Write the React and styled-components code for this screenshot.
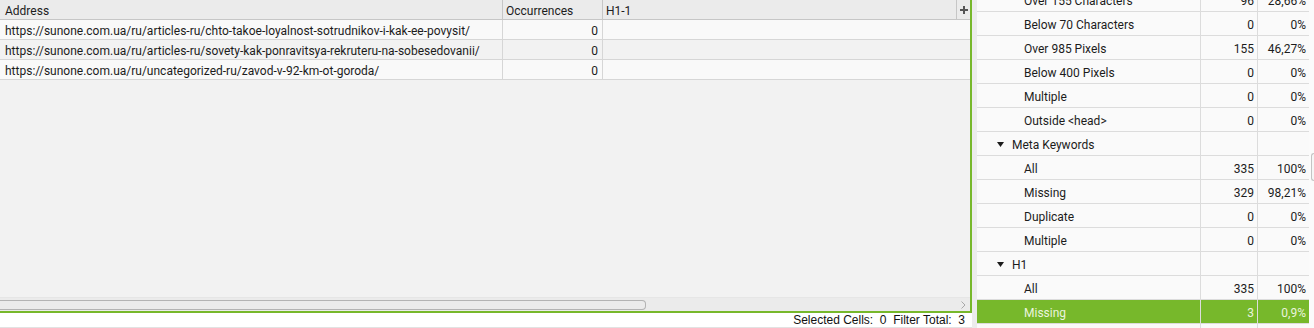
import React from "react";
import styled, { createGlobalStyle } from "styled-components";

const GREEN = "#77b82b";

const Global = createGlobalStyle`
  html, body { margin: 0; padding: 0; background: #ececec; }
  body { font-family: Roboto, "Noto Sans", sans-serif; font-size: 12px; color: #1c1c1c; }
`;

const Screen = styled.div`
  display: flex;
  width: 1314px;
  height: 328px;
  overflow: hidden;
  background: #ececec;
`;

const LeftPane = styled.div`
  width: 972px;
  display: flex;
  flex-direction: column;
  flex: none;
`;

const TablePanel = styled.div`
  height: 313px;
  box-sizing: border-box;
  border-right: 2px solid ${GREEN};
  border-bottom: 2px solid ${GREEN};
  background: #f2f2f2;
  display: flex;
  flex-direction: column;
`;

const Grid = styled.div`
  flex: 1;
  display: flex;
  flex-direction: column;
  min-height: 0;
`;

const Row = styled.div`
  display: grid;
  grid-template-columns: 503px 100px 1fr ${(p) => (p.$header ? "13px" : "0px")};
  height: 20px;
  box-sizing: border-box;
  border-bottom: 1px solid ${(p) => (p.$header ? "#c6c6c6" : "#d6d6d6")};
  background: ${(p) => (p.$header ? "#ebebeb" : p.$alt ? "#f2f2f2" : "#f9f9f9")};
`;

const Cell = styled.div`
  box-sizing: border-box;
  height: 19px;
  padding: 3px ${(p) => (p.$right ? "4px" : "3px")} 0 ${(p) => (p.$first ? "5px" : "3px")};
  line-height: 16px;
  white-space: nowrap;
  overflow: hidden;
  text-align: ${(p) => (p.$right ? "right" : "left")};
  border-right: ${(p) => (p.$last ? "none" : `1px solid ${p.$header ? "#c6c6c6" : "#d6d6d6"}`)};
`;

const PlusCell = styled.div`
  display: flex;
  align-items: center;
  justify-content: center;
  height: 19px;
  padding-left: 1px;
`;

const HScroll = styled.div`
  height: 13px;
  flex: none;
  background: #ebebeb;
  display: flex;
  align-items: center;
  justify-content: space-between;
  padding-right: 4px;
  border-top: 1px solid #e6e6e6;
`;

const HThumb = styled.div`
  width: 645px;
  height: 8px;
  border: 1px solid #b3b3b3;
  border-left: none;
  border-radius: 0 4px 4px 0;
  background: #ebebeb;
`;

const StatusBar = styled.div`
  flex: 1;
  background: #ffffff;
  border-bottom: 1px solid #e2e2e2;
  display: flex;
  align-items: center;
  justify-content: flex-end;
  padding-right: 7px;
  font-family: "Liberation Sans", Arial, sans-serif;
  font-size: 12px;
  color: #111;
  white-space: pre;
`;

const Splitter = styled.div`
  width: 5px;
  flex: none;
  background: #ececec;
`;

const RightPane = styled.div`
  flex: 1;
  display: flex;
  overflow: hidden;
  background: #f7f7f7;
`;

const Tree = styled.div`
  flex: 1;
  overflow: hidden;
`;

const TreeInner = styled.div`
  margin-top: -12px;
`;

const TreeRow = styled.div`
  display: grid;
  grid-template-columns: 224px 57px 1fr;
  height: 24px;
  box-sizing: border-box;
  border-bottom: 1px solid #dcdcdc;
  background: ${(p) => (p.$selected ? GREEN : "#fafafa")};
  color: ${(p) => (p.$selected ? "#eaf4de" : "#1c1c1c")};
`;

const TreeCell = styled.div`
  box-sizing: border-box;
  height: 23px;
  padding-top: 4px;
  line-height: 19px;
  white-space: nowrap;
  overflow: hidden;
  text-align: ${(p) => (p.$right ? "right" : "left")};
  padding-right: ${(p) => (p.$right ? "3px" : "0")};
  padding-left: ${(p) => p.$indent || 0}px;
  border-right: ${(p) => (p.$last ? "none" : "1px solid #dcdcdc")};
  display: flex;
  align-items: center;
  justify-content: ${(p) => (p.$right ? "flex-end" : "flex-start")};
`;

const Caret = styled.svg`
  width: 7px;
  height: 5px;
  margin-right: 8px;
  margin-top: -2px;
  flex: none;
`;

const VScroll = styled.div`
  width: 5px;
  flex: none;
  background: #fbfbfb;
  padding-top: 153px;
  box-sizing: border-box;
`;

const VThumb = styled.div`
  margin-left: 2px;
  height: 26px;
  border: 1px solid #c4c4c4;
  border-right: none;
  border-radius: 3px 0 0 3px;
  background: #f6f6f6;
`;

const rows = [
  { url: "https://sunone.com.ua/ru/articles-ru/chto-takoe-loyalnost-sotrudnikov-i-kak-ee-povysit/", n: 0 },
  { url: "https://sunone.com.ua/ru/articles-ru/sovety-kak-ponravitsya-rekruteru-na-sobesedovanii/", n: 0 },
  { url: "https://sunone.com.ua/ru/uncategorized-ru/zavod-v-92-km-ot-goroda/", n: 0 },
];

const tree = [
  { label: "Over 155 Characters", n: "96", p: "28,66%" },
  { label: "Below 70 Characters", n: "0", p: "0%" },
  { label: "Over 985 Pixels", n: "155", p: "46,27%" },
  { label: "Below 400 Pixels", n: "0", p: "0%" },
  { label: "Multiple", n: "0", p: "0%" },
  { label: "Outside <head>", n: "0", p: "0%" },
  { label: "Meta Keywords", group: true },
  { label: "All", n: "335", p: "100%" },
  { label: "Missing", n: "329", p: "98,21%" },
  { label: "Duplicate", n: "0", p: "0%" },
  { label: "Multiple", n: "0", p: "0%" },
  { label: "H1", group: true },
  { label: "All", n: "335", p: "100%" },
  { label: "Missing", n: "3", p: "0,9%", selected: true },
  { label: "Duplicate", n: "0", p: "0%" },
];

export default function App() {
  return (
    <>
      <Global />
      <Screen>
        <LeftPane>
          <TablePanel>
            <Grid>
              <Row $header>
                <Cell $header $first>Address</Cell>
                <Cell $header>Occurrences</Cell>
                <Cell $header>H1-1</Cell>
                <PlusCell>
                  <svg width="8" height="8" viewBox="0 0 8 8">
                    <path d="M3 0h2v3h3v2H5v3H3V5H0V3h3z" fill="#555" />
                  </svg>
                </PlusCell>
              </Row>
              {rows.map((r, i) => (
                <Row key={i} $alt={i % 2 === 1}>
                  <Cell $first>{r.url}</Cell>
                  <Cell $right>{r.n}</Cell>
                  <Cell $last />
                </Row>
              ))}
            </Grid>
            <HScroll>
              <HThumb />
              <svg width="5" height="8" viewBox="0 0 5 8">
                <path d="M0.5 0.5L4 4L0.5 7.5" fill="none" stroke="#a8a8a8" strokeWidth="1" />
              </svg>
            </HScroll>
          </TablePanel>
          <StatusBar>{"Selected Cells:  0  Filter Total:  3"}</StatusBar>
        </LeftPane>
        <Splitter />
        <RightPane>
          <Tree>
            <TreeInner>
              {tree.map((t, i) => (
                <TreeRow key={i} $selected={t.selected}>
                  {t.group ? (
                    <TreeCell $indent={20}>
                      <Caret viewBox="0 0 7 5">
                        <path d="M0 0h7L3.5 5z" fill="#1c1c1c" />
                      </Caret>
                      {t.label}
                    </TreeCell>
                  ) : (
                    <TreeCell $indent={47}>{t.label}</TreeCell>
                  )}
                  <TreeCell $right>{t.n || ""}</TreeCell>
                  <TreeCell $right $last>{t.p || ""}</TreeCell>
                </TreeRow>
              ))}
            </TreeInner>
          </Tree>
          <VScroll>
            <VThumb />
          </VScroll>
        </RightPane>
      </Screen>
    </>
  );
}
